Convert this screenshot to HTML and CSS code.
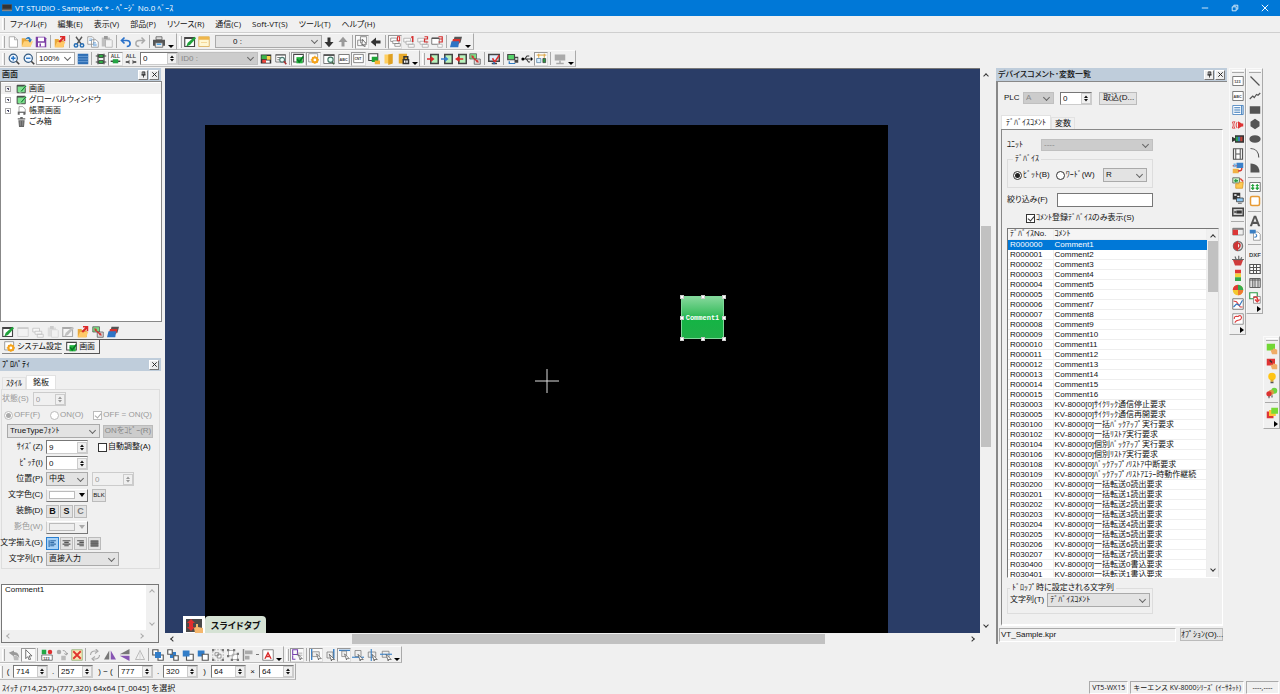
FILE: index.html
```html
<!DOCTYPE html>
<html lang="ja">
<head>
<meta charset="utf-8">
<title>VT STUDIO - Sample.vfx</title>
<link rel="stylesheet" href="styles.css">
</head>
<body>
<svg class="sprite" aria-hidden="true">
<symbol id="new" viewBox="0 0 16 16"><path d="M3 1h7l4 4v10H3z" fill="#fff" stroke="#999"/><path d="M10 1v4h4" fill="none" stroke="#999"/></symbol>
<symbol id="open" viewBox="0 0 16 16"><path d="M1 3h5l1 2h6v9H1z" fill="#e8a83a"/><path d="M4 7h12l-3 7H1z" fill="#ffd27a"/><path d="M6 4c3-4 7-3 7 1l2-1-3 5-3-4 2 1c0-3-3-3-5-1z" fill="#2878bd"/></symbol>
<symbol id="save" viewBox="0 0 16 16"><path d="M1 1h12l2 2v12H1z" fill="#7d3fa6"/><path d="M4 2h8v5H4zM4 9h9v5H4z" fill="#fff"/><path d="M6 10h2v4H6z" fill="#7d3fa6"/></symbol>
<symbol id="export" viewBox="0 0 16 16"><path d="M1 4h5l1 2h6v9H1z" fill="#e8a83a"/><path d="M4 8h11l-3 7H1z" fill="#ffc968"/><path d="M6 7l5-5H8V0h7v7h-2V4L8 9z" fill="#dc2a2a"/></symbol>
<symbol id="cut" viewBox="0 0 16 16"><path d="M4 1l7 10M12 1L5 11" stroke="#555" stroke-width="1.800"/><g fill="none" stroke="#286fb5" stroke-width="2"><circle cx="4" cy="12.500" r="2.300"/><circle cx="12" cy="12.500" r="2.300"/></g></symbol>
<symbol id="copy" viewBox="0 0 16 16"><path d="M1 1h6l2 2v8H1zM6 5h6l3 3v7H6z" fill="#fff" stroke="#8a8a8a"/><path d="M3 4h4M3 6h3M8 9h4M8 11h5M8 13h5" stroke="#5a9ad8"/></symbol>
<symbol id="paste" viewBox="0 0 16 16"><path d="M1 2h11v12H1z" fill="#c0c0c0"/><path d="M4 0h5v4H4z" fill="#999"/><path d="M6 5h8l1 1v9H6z" fill="#f4f4f4" stroke="#aaa"/></symbol>
<symbol id="undo" viewBox="0 0 16 16"><path d="M6 2L2 6l4 4M2 6h7c6 0 6 8 0 8" fill="none" stroke="#2a71c9" stroke-width="2.200"/></symbol>
<symbol id="redo" viewBox="0 0 16 16"><path d="M10 2l4 4-4 4M14 6H7c-6 0-6 8 0 8" fill="none" stroke="#aaa" stroke-width="2"/></symbol>
<symbol id="print" viewBox="0 0 16 16"><path d="M4 1h8v4H4z" fill="#ddd" stroke="#555"/><path d="M0 5h16v8H0z" fill="#555"/><path d="M3 9h10v6H3z" fill="#eee" stroke="#555"/><path d="M5 11h6" stroke="#55a8e8" stroke-width="2"/></symbol>
<symbol id="edit" viewBox="0 0 16 16"><path d="M1 2h13v12H1z" fill="#fff" stroke="#444" stroke-width="1.500"/><path d="M1 3h13" stroke="#444" stroke-width="2"/><path d="M3 14l2-5 9-8 2 2-8 9z" fill="#21a33b"/></symbol>
<symbol id="green" viewBox="0 0 16 16"><path d="M1 2h13v12H1z" fill="#7be38c" stroke="#444" stroke-width="1.500"/><path d="M1 3h13" stroke="#444" stroke-width="2"/><path d="M5 14l2-4 7-8 2 2-7 8z" fill="#179332" stroke="#e7ffe9" stroke-width=".7"/></symbol>
<symbol id="window" viewBox="0 0 16 16"><path d="M1 1h14v13H1z" fill="#fff7d3" stroke="#d8a84b"/><path d="M1 1h14v4H1z" fill="#efb64b"/><path d="M4 8h8v1H4z" fill="#f1cf88"/></symbol>
<symbol id="down" viewBox="0 0 16 16"><path d="M6 2h4v6h4l-6 7-6-7h4z" fill="#333"/></symbol>
<symbol id="up" viewBox="0 0 16 16"><path d="M6 14h4V8h4L8 1 2 8h4z" fill="#999"/></symbol>
<symbol id="left" viewBox="0 0 16 16"><path d="M14 6v4H8v4L1 8l7-6v4z" fill="#333"/></symbol>
<symbol id="pick" viewBox="0 0 16 16"><path d="M5 1h9v9H5zM1 6h8v8H1z" fill="none" stroke="#666"/><path d="M8 5l6 7-3 0 1 3-2 0-1-3-2 1z" fill="#fff" stroke="#444"/></symbol>
<symbol id="ov" viewBox="0 0 16 16"><path d="M1 3h9v5H1z" fill="#fff" stroke="#777"/><path d="M4 7h9v4H4zM7 11h8v4H7z" fill="#fff" stroke="#777"/></symbol>
<symbol id="ov0" viewBox="0 0 16 16"><use href="#ov"/><path d="M11 1h3v6h-3z" fill="#fff" stroke="#d53030" stroke-width="1.600"/></symbol>
<symbol id="ov1" viewBox="0 0 16 16"><use href="#ov" opacity=".6"/><path d="M11 2l2-1v7" fill="none" stroke="#d53030" stroke-width="2"/></symbol>
<symbol id="ov2" viewBox="0 0 16 16"><use href="#ov" opacity=".6"/><path d="M10 1h4v3h-4v4h5" fill="none" stroke="#d53030" stroke-width="1.600"/></symbol>
<symbol id="ov3" viewBox="0 0 16 16"><path d="M1 3h10v8H1z" fill="#fff" stroke="#555"/><path d="M1 3h10" stroke="#555" stroke-width="2"/><path d="M9 11h6v4H9z" fill="#fff" stroke="#aaa"/><path d="M10 1h5v7h-5M11 4h4" fill="none" stroke="#d53030" stroke-width="1.600"/></symbol>
<symbol id="layers" viewBox="0 0 16 16"><path d="M6 1h10l-2 8H4z" fill="#555"/><path d="M4 4h10l-2 7H2z" fill="#d9322e"/><path d="M2 7h10l-1 8H0z" fill="#2e74c5"/></symbol>
<symbol id="zin" viewBox="0 0 16 16"><circle cx="7" cy="7" r="5.500" fill="#eef6ff" stroke="#345a80" stroke-width="1.600"/><path d="M4 7h6M7 4v6" stroke="#2374c8" stroke-width="1.800"/><path d="M11 11l4 4" stroke="#444" stroke-width="2.200"/></symbol>
<symbol id="zout" viewBox="0 0 16 16"><circle cx="7" cy="7" r="5.500" fill="#eef6ff" stroke="#345a80" stroke-width="1.600"/><path d="M4 7h6" stroke="#2374c8" stroke-width="1.800"/><path d="M11 11l4 4" stroke="#444" stroke-width="2.200"/></symbol>
<symbol id="lines" viewBox="0 0 16 16"><path d="M1 1h14v14H1z" fill="#2f6fb5"/><path d="M1 4.500h14M1 8h14M1 11.500h14" stroke="#7ba9dc"/></symbol>
<symbol id="dev" viewBox="0 0 16 16"><path d="M1 4h14M1 12h14M4 1v14M12 1v14" stroke="#444" stroke-width="1.600"/><path d="M5 2h6v4H5zM5 10h6v4H5z" fill="#2fae45" stroke="#333"/></symbol>
<symbol id="all1" viewBox="0 0 16 16"><text x="1" y="7" class="g7">ALL</text><path d="M1 12h14" stroke="#333" stroke-width="2"/><path d="M4 9h8v6H4z" fill="#23a443"/></symbol>
<symbol id="all2" viewBox="0 0 16 16"><text x="1" y="7" class="g7">ALL</text><path d="M1 12h3M12 12h3" stroke="#333" stroke-width="2"/><path d="M6 9v6l-3-3zM10 9v6l3-3z" fill="#555"/></symbol>
<symbol id="img" viewBox="0 0 16 16"><path d="M1 2h14v12H1z" fill="#333"/><path d="M2 3h7v5H2z" fill="#39b54a"/><path d="M9 4h5v5H9z" fill="#ffd34d"/><path d="M3 9h5v4H3z" fill="#ee473d"/><path d="M8 10h5v3H8z" fill="#fff"/></symbol>
<symbol id="find" viewBox="0 0 16 16"><path d="M1 2h13v10H1z" fill="#fff" stroke="#555"/><path d="M1 3h13M3 6h4M3 9h3" stroke="#555"/><circle cx="9.500" cy="9" r="3.200" fill="#e9fff8" stroke="#4b7770" stroke-width="1.500"/><path d="M12 11l3 4" stroke="#a33" stroke-width="2"/></symbol>
<symbol id="check" viewBox="0 0 16 16"><path d="M1 2h14v11H1z" fill="#fff" stroke="#444" stroke-width="1.500"/><path d="M5 6h9v9H5z" fill="#25b540"/><path d="M6 9l3 4 6-8" fill="none" stroke="#087723" stroke-width="2.200"/></symbol>
<symbol id="gear" viewBox="0 0 16 16"><path d="M1 1h13v12H1z" fill="#fff" stroke="#777"/><circle cx="10" cy="10" r="3.500" fill="none" stroke="#f4a31c" stroke-width="3"/><path d="M10 4v12M4 10h12M6 6l8 8M14 6l-8 8" stroke="#f4a31c" stroke-width="1.600"/><circle cx="10" cy="10" r="2" fill="#fff"/></symbol>
<symbol id="mag" viewBox="0 0 16 16"><path d="M1 2h14v12H1z" fill="#fff" stroke="#555"/><path d="M1 3h14" stroke="#555" stroke-width="2"/><circle cx="10" cy="9" r="3.500" fill="#e0fff4" stroke="#476" stroke-width="1.500"/><path d="M12 12l3 3" stroke="#464" stroke-width="2"/></symbol>
<symbol id="abc" viewBox="0 0 16 16"><path d="M1 2h14v12H1z" fill="#fff" stroke="#555"/><text x="2" y="10" class="g6">ABC</text></symbol>
<symbol id="cnt" viewBox="0 0 16 16"><path d="M1 2h14v12H1z" fill="#fff" stroke="#555"/><text x="2" y="10" class="g6">CNT</text></symbol>
<symbol id="n123" viewBox="0 0 16 16"><path d="M1 2h14v12H1z" fill="#fff" stroke="#555"/><text x="3" y="10" class="g6">123</text></symbol>
<symbol id="lgreen" viewBox="0 0 16 16"><path d="M1 1h12v9H1z" fill="#fff" stroke="#444" stroke-width="1.500"/><path d="M5 5h8v7H5z" fill="#1da437"/><path d="M9 10h7v5H9z" fill="#f5b335"/></symbol>
<symbol id="door" viewBox="0 0 16 16"><path d="M2 2h10v12H2z" fill="#ffcf61"/><path d="M7 2l6-1v13l-6 2z" fill="#dfa022"/></symbol>
<symbol id="lock" viewBox="0 0 16 16"><path d="M1 1h11v13H1z" fill="#e7aa2d"/><path d="M6 8h9v7H6z" fill="#333"/><path d="M8 8V5h5v3" fill="none" stroke="#333" stroke-width="2"/><path d="M8 10h2v3H8zM11 10h2v3h-2z" fill="#fff"/></symbol>
<symbol id="inred" viewBox="0 0 16 16"><path d="M5 2h10v12H5z" fill="#b8f2bb" stroke="#444" stroke-width="2"/><path d="M0 7h5V4l5 4-5 4V9H0z" fill="#dc2727"/></symbol>
<symbol id="inblue" viewBox="0 0 16 16"><path d="M5 2h10v12H5z" fill="#b8f2bb" stroke="#444" stroke-width="2"/><path d="M0 7h5V4l5 4-5 4V9H0z" fill="#347fd0"/></symbol>
<symbol id="outred" viewBox="0 0 16 16"><path d="M5 2h10v12H5z" fill="#b8f2bb" stroke="#444" stroke-width="2"/><path d="M11 7H6V4L0 8l6 4V9h5z" fill="#dc2727"/></symbol>
<symbol id="swap" viewBox="0 0 16 16"><path d="M1 1h9v7H1z" fill="#7adf85" stroke="#555"/><path d="M7 8h8v7H7z" fill="#ddd" stroke="#555"/><path d="M4 5l7 6" stroke="#cf3434" stroke-width="1.800"/><path d="M3 3l4 1-3 3zM13 13l-4-1 3-3z" fill="#cf3434"/></symbol>
<symbol id="monitor" viewBox="0 0 16 16"><path d="M1 2h14v9H1z" fill="#dfeefb" stroke="#444" stroke-width="2"/><path d="M5 14h7" stroke="#444" stroke-width="2"/><path d="M6 7l3 5 6-9" fill="none" stroke="#dc3030" stroke-width="2"/><path d="M8 12v3" stroke="#2472c3" stroke-width="2"/></symbol>
<symbol id="pc" viewBox="0 0 16 16"><path d="M1 2h9v7H1z" fill="#56d36a" stroke="#444" stroke-width="1.500"/><path d="M10 5h5v8h-5z" fill="#444"/><path d="M11 7h3v2h-3z" fill="#fff"/><path d="M3 11v3h8" fill="none" stroke="#2f7ac2" stroke-width="1.600"/></symbol>
<symbol id="usb" viewBox="0 0 16 16"><path d="M2 8h12M5 8l3-4h3M7 8l3 4h2" fill="none" stroke="#333" stroke-width="1.400"/><circle cx="2.500" cy="8" r="2"/><path d="M13 5l3 3-3 3z"/></symbol>
<symbol id="net" viewBox="0 0 16 16"><path d="M1 3h14M4 1v6M12 1v6" stroke="#dca13a" stroke-width="1.400"/><path d="M1 8h6v6H1z" fill="#d8efff" stroke="#47749a"/><path d="M10 8h4v6h-4z" fill="#2b9a42" stroke="#333"/></symbol>
<symbol id="present" viewBox="0 0 16 16"><path d="M1 2h14v8H1z" fill="#aaa"/><path d="M8 10v4M3 14h10" stroke="#aaa" stroke-width="2"/></symbol>
<symbol id="frame" viewBox="0 0 16 16"><path d="M1 2h14v12H1z" fill="#f7f7f7" stroke="#999"/><path d="M1 3h14" stroke="#999" stroke-width="2"/></symbol>
<symbol id="report" viewBox="0 0 16 16"><path d="M4 1h6l4 4v8H4z" fill="#fff" stroke="#777"/><path d="M2 9h12v5H2z" fill="#666"/><path d="M5 11h6v4H5z" fill="#fff"/></symbol>
<symbol id="trash" viewBox="0 0 16 16"><path d="M3 5h10l-1 11H4zM2 2h12v2H2zM6 0h4v2H6z" fill="#666"/><path d="M6 6v8M10 6v8" stroke="#aaa"/></symbol>
<symbol id="cursor" viewBox="0 0 16 16"><path d="M4 1l9 9-4 0 2 5-2 1-2-5-3 3z" fill="#fff" stroke="#555" stroke-width="1.200"/></symbol>
<symbol id="hand" viewBox="0 0 16 16"><path d="M1 5l7-3v2c5 0 7 4 7 8-2-3-4-4-7-4v2z" fill="#999"/><path d="M7 9h4l3 2v4H8z" fill="#bbb"/></symbol>
<symbol id="num" viewBox="0 0 16 16"><path d="M1 1h6v6H1z" fill="#23a844"/><circle cx="12" cy="4" r="3" fill="#df3030"/><path d="M1 8h14v7H1z" fill="#fff" stroke="#555"/><text x="3" y="14" class="g6">123</text></symbol>
<symbol id="conv" viewBox="0 0 16 16"><circle cx="4" cy="4" r="3" fill="#aaa"/><path d="M9 2c4 0 5 3 5 5M11 6l3 2 2-3" fill="none" stroke="#888"/><path d="M7 9h6v6H7z" fill="#bbb"/></symbol>
<symbol id="delete" viewBox="0 0 16 16"><path d="M1 1h14v14H1z" fill="#fbe6b7" stroke="#87a96c"/><path d="M3 3l10 10M13 3L3 13" stroke="#df352e" stroke-width="2.400"/></symbol>
<symbol id="rotate" viewBox="0 0 16 16"><path d="M2 8c0-4 3-6 8-5M9 0l3 3-4 3M14 8c0 4-3 6-8 5M7 16l-3-3 4-3" fill="none" stroke="#aaa" stroke-width="1.500"/></symbol>
<symbol id="fliph" viewBox="0 0 16 16"><path d="M7 2v12H0z" fill="#777"/><path d="M9 2v12h7z" fill="#8755b3"/></symbol>
<symbol id="flipv" viewBox="0 0 16 16"><path d="M1 7L14 0v7z" fill="#777"/><path d="M1 9h13v7z" fill="#8755b3"/></symbol>
<symbol id="tri" viewBox="0 0 16 16"><path d="M8 2l6 12H2z" fill="none" stroke="#aaa"/><path d="M8 1v14" stroke="#ccc"/></symbol>
<symbol id="front" viewBox="0 0 16 16"><path d="M1 1h7v7H1zM8 8h7v7H8z" fill="#fff" stroke="#555" stroke-width="1.500"/><path d="M4 4h8v8H4z" fill="#327dc8"/></symbol>
<symbol id="back" viewBox="0 0 16 16"><path d="M4 4h8v8H4z" fill="#327dc8"/><path d="M1 1h6v6H1zM9 9h6v6H9z" fill="#fff" stroke="#555" stroke-width="1.500"/></symbol>
<symbol id="fwd" viewBox="0 0 16 16"><path d="M6 7h9v8H6z" fill="#fff" stroke="#555" stroke-width="1.500"/><path d="M1 2h9v8H1z" fill="#327dc8"/></symbol>
<symbol id="bwd" viewBox="0 0 16 16"><path d="M1 2h9v8H1z" fill="#327dc8"/><path d="M7 7h8v8H7z" fill="#fff" stroke="#555" stroke-width="1.500"/></symbol>
<symbol id="group" viewBox="0 0 16 16"><path d="M3 1h10M3 15h10M1 3v10M15 3v10" fill="none" stroke="#999" stroke-dasharray="2 2"/><path d="M4 5h5v4H4zM7 7h5v5H7z" fill="#fff" stroke="#777"/><path d="M0 0h3v3H0zM13 0h3v3h-3zM0 13h3v3H0zM13 13h3v3h-3z" fill="#777"/></symbol>
<symbol id="ungroup" viewBox="0 0 16 16"><path d="M2 2h7v7H2zM7 7h7v7H7z" fill="#fff" stroke="#999"/><path d="M0 0h3v3H0zM8 0h3v3H8zM0 8h3v3H0zM13 5h3v3h-3zM5 13h3v3H5zM13 13h3v3h-3z" fill="#777"/></symbol>
<symbol id="align" viewBox="0 0 16 16"><path d="M2 0v16" stroke="#888" stroke-width="2"/><path d="M4 2h10v5H4zM4 9h6v5H4z" fill="#aaa"/></symbol>
<symbol id="fonta" viewBox="0 0 16 16"><path d="M1 1h14v14H1z" fill="#fff" stroke="#666"/><path d="M3 13L8 3l5 10h-2L8 7l-3 6z" fill="#d82929"/><path d="M6 9h4v2H6z" fill="#d82929"/></symbol>
<symbol id="selg" viewBox="0 0 16 16"><path d="M1 1h7v7H1zM1 9v6h4" fill="none" stroke="#7944b0" stroke-width="1.600"/><path d="M7 6h8M7 9h8" stroke="#888"/><path d="M9 8l6 6h-3v2z" fill="#fff" stroke="#555"/></symbol>
<symbol id="snapl" viewBox="0 0 16 16"><path d="M1 0v16" stroke="#3c82c7" stroke-width="2"/><path d="M2 4h10v7H2z" fill="#eee" stroke="#777"/><path d="M8 7l7 7h-4v2z" fill="#fff" stroke="#555"/></symbol>
<symbol id="snapt" viewBox="0 0 16 16"><path d="M0 2h16" stroke="#3c82c7" stroke-width="2"/><path d="M4 3h7v8H4z" fill="#eee" stroke="#777"/><path d="M8 7l7 7h-4v2z" fill="#fff" stroke="#555"/></symbol>
<symbol id="snapm" viewBox="0 0 16 16"><path d="M3 3h9v8H3z" fill="#eee" stroke="#777"/><path d="M0 7h16" stroke="#3c82c7" stroke-width="1.500"/><path d="M8 7l7 7h-4v2z" fill="#fff" stroke="#555"/></symbol>
<symbol id="snapb" viewBox="0 0 16 16"><path d="M4 2h8v8H4z" fill="#eee" stroke="#777"/><path d="M0 11h16" stroke="#3c82c7" stroke-width="1.500"/><path d="M8 7l7 7h-4v2z" fill="#fff" stroke="#555"/></symbol>
<symbol id="snapr" viewBox="0 0 16 16"><path d="M13 0v13" stroke="#3c82c7" stroke-width="2"/><path d="M4 4h8v8H4z" fill="#eee" stroke="#777"/><path d="M7 7l7 7h-4v2z" fill="#fff" stroke="#555"/></symbol>
<symbol id="snapc" viewBox="0 0 16 16"><path d="M3 4h10v7H3z" fill="#eee" stroke="#777"/><path d="M7 0v16" stroke="#3c82c7" stroke-width="1.500"/><path d="M8 7l7 7h-4v2z" fill="#fff" stroke="#555"/></symbol>
<symbol id="list" viewBox="0 0 16 16"><path d="M1 2h14v12H1z" fill="#fff" stroke="#3576b8"/><path d="M3 5h8M3 8h8M3 11h8M13 2v12" stroke="#3576b8" stroke-width="1.500"/></symbol>
<symbol id="sound" viewBox="0 0 16 16"><path d="M8 3l5 3h2v4h-2l-5 3z" fill="#dd3434"/><path d="M7 4c-2 2-2 6 0 8M4 3c-2 3-2 7 0 10M2 3c-3 3-3 7 0 10" fill="none" stroke="#e24c4c" stroke-width="1.400"/></symbol>
<symbol id="video" viewBox="0 0 16 16"><path d="M4 3h12v10H4z" fill="#333"/><path d="M0 5l4 2v3l-4 2z" fill="#333"/><path d="M5 5h3v6H5z" fill="#2b9c50"/><path d="M8 5h3v6H8z" fill="#3979bf"/><path d="M11 5h3v6h-3z" fill="#bf4135"/></symbol>
<symbol id="film" viewBox="0 0 16 16"><path d="M2 1h12v14H2z" fill="#fff" stroke="#555" stroke-width="1.600"/><path d="M5 8h6M5 1v14M11 1v14" stroke="#555" stroke-width="1.400"/></symbol>
<symbol id="docs" viewBox="0 0 16 16"><path d="M6 1h9v7H6z" fill="#3a80c9"/><path d="M1 9h8v6H1z" fill="#f1b144"/><path d="M1 5h5M8 12c5 0 5-1 5-4" fill="none" stroke="#d43b32" stroke-width="2"/><path d="M2 2h3v5H2z" fill="#74b6e8"/></symbol>
<symbol id="folder" viewBox="0 0 16 16"><path d="M1 1h9v7H1z" fill="#c7f0c7" stroke="#555"/><path d="M3 5h5M5 3v4" stroke="#2a9c43" stroke-width="2"/><path d="M5 9h4l1-2h5l-1 8H5z" fill="#ffc950" stroke="#d59622"/><path d="M11 2l4 4" stroke="#de4436" stroke-width="2"/></symbol>
<symbol id="remote" viewBox="0 0 16 16"><path d="M1 1h10v9H1z" fill="#333"/><path d="M3 3h3v2H3zM7 5h3v2H7z" fill="#fff"/><path d="M6 8h9v5H6z" fill="#8ec7f2" stroke="#333"/><path d="M8 15h5" stroke="#333"/></symbol>
<symbol id="term" viewBox="0 0 16 16"><path d="M1 3h14v10H1z" fill="#ccc" stroke="#444" stroke-width="2"/><path d="M6 6h7v4H6z" fill="#333"/><path d="M3 8h3" stroke="#333" stroke-width="2"/></symbol>
<symbol id="alarm" viewBox="0 0 16 16"><path d="M1 3h14v9H1z" fill="#eee" stroke="#777"/><path d="M1 3h14v2H1z" fill="#777"/><path d="M1 5h7v7H1z" fill="#dc3636"/></symbol>
<symbol id="recipe" viewBox="0 0 16 16"><circle cx="8" cy="8" r="6" fill="#eee" stroke="#777" stroke-width="2"/><path d="M8 1v14L2 11V5z" fill="#ce3434"/><path d="M7 4c5 0 5 6 0 8" fill="none" stroke="#ce3434" stroke-width="2"/></symbol>
<symbol id="basket" viewBox="0 0 16 16"><path d="M1 6h14l-3 8H4z" fill="#cf3c3c"/><path d="M4 2l2 5M9 1v6M13 3l-2 4M0 6h16" stroke="#666" stroke-width="1.500"/></symbol>
<symbol id="bars" viewBox="0 0 16 16"><path d="M4 1h8v5H4z" fill="#df3535"/><path d="M4 6h8v5H4z" fill="#f4d33b"/><path d="M4 11h8v5H4z" fill="#34a84b"/></symbol>
<symbol id="pie" viewBox="0 0 16 16"><circle cx="8" cy="8" r="7" fill="#f4c82f"/><path d="M8 8V1a7 7 0 0 1 7 7z" fill="#35ab4d"/><path d="M8 8H1a7 7 0 0 1 7-7z" fill="#dd3939"/><path d="M8 8h7a7 7 0 0 1-7 7z" fill="#ef7930"/></symbol>
<symbol id="trend" viewBox="0 0 16 16"><path d="M1 1h14v14H1z" fill="#fff" stroke="#555"/><path d="M2 4l4 1 5 7 3 0" fill="none" stroke="#db3e3e" stroke-width="1.500"/><path d="M2 12l4-4 4 2 4-7" fill="none" stroke="#3476bd" stroke-width="1.500"/></symbol>
<symbol id="trend2" viewBox="0 0 16 16"><path d="M1 1h14v14H1z" fill="#fff" stroke="#777"/><path d="M3 8c0-6 4-2 6-4s5 1 3 4-7 0-8 5" fill="none" stroke="#db3e3e" stroke-width="1.500"/></symbol>
<symbol id="line" viewBox="0 0 16 16"><path d="M2 2l12 12" stroke="#555" stroke-width="1.600"/></symbol>
<symbol id="poly" viewBox="0 0 16 16"><path d="M1 12l4-4 2 2 3-4 2 1 3-3" fill="none" stroke="#555" stroke-width="1.600"/></symbol>
<symbol id="rect" viewBox="0 0 16 16"><path d="M1 3h14v10H1z" fill="#555"/></symbol>
<symbol id="hex" viewBox="0 0 16 16"><path d="M8 1l6 4v6l-6 4-6-4V5z" fill="#555"/></symbol>
<symbol id="ell" viewBox="0 0 16 16"><ellipse cx="8" cy="8" rx="7.500" ry="5" fill="#555"/></symbol>
<symbol id="arc" viewBox="0 0 16 16"><path d="M2 2c7 0 11 5 11 12" fill="none" stroke="#555" stroke-width="1.500"/></symbol>
<symbol id="sector" viewBox="0 0 16 16"><path d="M2 2c8 0 12 5 12 12H2z" fill="#555"/></symbol>
<symbol id="scale" viewBox="0 0 16 16"><path d="M1 2h14v12H1z" fill="#fff" stroke="#555"/><path d="M5 4v8M11 4v8M3 9l2 2 2-2M9 9l2 2 2-2M3 6h4M9 6h4" fill="none" stroke="#23a33d" stroke-width="1.600"/></symbol>
<symbol id="round" viewBox="0 0 16 16"><rect x="2" y="2" width="12" height="12" rx="2" fill="#fff" stroke="#e79a35" stroke-width="2"/></symbol>
<symbol id="bigA" viewBox="0 0 16 16"><path d="M1 15L6.500 1h3L15 15h-3l-1-3H5l-1 3zM6 9h4L8 4z" fill="#555" fill-rule="evenodd"/></symbol>
<symbol id="page" viewBox="0 0 16 16"><path d="M6 4h6l3 3v8H6z" fill="#fff" stroke="#888"/><path d="M1 1h8v5H1z" fill="#3b7fc3"/><path d="M7 11c4 0 4-3 2-4" fill="none" stroke="#3b7fc3" stroke-width="1.500"/></symbol>
<symbol id="dxf" viewBox="0 0 16 16"><text x="0" y="11" class="g8">DXF</text></symbol>
<symbol id="grid" viewBox="0 0 16 16"><path d="M1 2h14v12H1zM1 6h14M1 10h14M6 2v12M10 2v12" fill="#fff" stroke="#555" stroke-width="1.400"/></symbol>
<symbol id="table" viewBox="0 0 16 16"><path d="M1 2h14v12H1zM1 4h14M5 2v12M8 2v12M12 2v12" fill="#ddd" stroke="#555" stroke-width="1.200"/></symbol>
<symbol id="parts" viewBox="0 0 16 16"><path d="M1 1h10v8H1z" fill="#fff" stroke="#2b9b45" stroke-width="1.500"/><path d="M6 6h9v9H6z" fill="#fff" stroke="#777"/><path d="M6 8c4-3 6 0 5 3M8 10l3 3 3-3" fill="none" stroke="#dd3a3a" stroke-width="2"/></symbol>
<symbol id="gh" viewBox="0 0 16 16"><path d="M1 1h11v9H1z" fill="#72d735"/><path d="M6 9h3l1-2 5 2v6H8z" fill="#efac67"/></symbol>
<symbol id="rh" viewBox="0 0 16 16"><path d="M1 1h11v9H1z" fill="#df3434"/><path d="M5 3l3 3" stroke="#333" stroke-width="2"/><path d="M6 9h3l1-2 5 2v6H8z" fill="#efac67"/></symbol>
<symbol id="bulb" viewBox="0 0 16 16"><circle cx="8" cy="6" r="5" fill="#ffc414"/><path d="M6 10h4v3H6z" fill="#e0ae28"/><path d="M6 14h4" stroke="#555" stroke-width="2"/></symbol>
<symbol id="balls" viewBox="0 0 16 16"><circle cx="11" cy="5" r="4" fill="#6cd33f"/><circle cx="7" cy="7" r="3.500" fill="#d89842"/><circle cx="4" cy="9" r="3.500" fill="#dd3232"/><path d="M4 12v3M8 11v3" stroke="#555" stroke-width="1.500"/></symbol>
<symbol id="blocks" viewBox="0 0 16 16"><path d="M1 6h9v9H1z" fill="#df3636"/><path d="M4 4h9v8H4z" fill="#ffc637"/><path d="M7 1h9v8H7z" fill="#78da37"/></symbol>
<symbol id="pin" viewBox="0 0 16 16"><path d="M5 2h6v7H5zM3 9h10M8 9v6M9 2v7" fill="none" stroke="#222" stroke-width="1.800"/></symbol>
<symbol id="x" viewBox="0 0 16 16"><path d="M3 3l10 10M13 3L3 13" stroke="#222" stroke-width="2.200"/></symbol>
<symbol id="ud" viewBox="0 0 8 12"><path d="M0 5l4-5 4 5zM0 7l4 5 4-5z" fill="currentColor"/></symbol>
<symbol id="tl" viewBox="0 0 16 16"><path d="M2 2v12" stroke="#336da8" stroke-width="2"/><path d="M4 3h10M4 6h7M4 9h10M4 12h7" stroke="#336da8" stroke-width="2"/></symbol>
<symbol id="tc" viewBox="0 0 16 16"><path d="M1 3h14M4 6h8M1 9h14M4 12h8" stroke="#555" stroke-width="2"/></symbol>
<symbol id="tr" viewBox="0 0 16 16"><path d="M2 3h12M6 6h8M2 9h12M6 12h8" stroke="#555" stroke-width="2"/></symbol>
<symbol id="tj" viewBox="0 0 16 16"><path d="M1 2h14v12H1z" fill="#777"/><path d="M1 5h14M1 8h14M1 11h14" stroke="#555"/></symbol>
</svg>

<header class="titlebar">
  <svg class="logo" viewBox="0 0 16 12" aria-hidden="true"><path d="M0 0h16v11H0z" fill="#555"/><path d="M1 1h14v6H1z" fill="#333"/><path d="M0 9h16v2H0z" fill="#888"/></svg>
  <h1>VT STUDIO - Sample.vfx * - ﾍﾟｰｼﾞ No.0 ﾍﾞｰｽ</h1>
  <div class="winbtns">
    <button aria-label="最小化"><svg viewBox="0 0 10 10"><path d="M1 5h8" stroke="#fff"/></svg></button>
    <button aria-label="元に戻す"><svg viewBox="0 0 10 10"><path d="M1.500 3.500h5v5h-5zM3.500 3V1.500h5v5H7" fill="none" stroke="#fff"/></svg></button>
    <button aria-label="閉じる"><svg viewBox="0 0 10 10"><path d="M1 1l8 8M9 1L1 9" stroke="#fff" stroke-width="1.200"/></svg></button>
  </div>
</header>
<nav class="menubar"><i class="grip"></i><button>ファイル(F)</button><button>編集(E)</button><button>表示(V)</button><button>部品(P)</button><button>リソース(R)</button><button>通信(C)</button><button>Soft-VT(S)</button><button>ツール(T)</button><button>ヘルプ(H)</button></nav>

<div class="toolrow row-a">
  <div class="tools"><i class="grip"></i><button aria-label="新規"><svg><use href="#new"/></svg></button><button aria-label="開く"><svg><use href="#open"/></svg></button><button aria-label="保存"><svg><use href="#save"/></svg></button><i class="sep"></i><button aria-label="書き出し"><svg><use href="#export"/></svg></button><i class="sep"></i><button aria-label="切り取り"><svg><use href="#cut"/></svg></button><button aria-label="コピー"><svg><use href="#copy"/></svg></button><button aria-label="貼り付け"><svg><use href="#paste"/></svg></button><i class="sep"></i><button aria-label="元に戻す"><svg><use href="#undo"/></svg></button><button aria-label="やり直し"><svg><use href="#redo"/></svg></button><i class="sep"></i><button aria-label="印刷"><svg><use href="#print"/></svg></button><i class="more"></i></div>
  <div class="tools"><i class="grip"></i><button aria-label="画面編集"><svg><use href="#edit"/></svg></button><button aria-label="ウィンドウ"><svg><use href="#window"/></svg></button><span class="combo page-combo"><select aria-label="ページ"><option>0 :</option></select></span><button aria-label="次"><svg><use href="#down"/></svg></button><button aria-label="前"><svg><use href="#up"/></svg></button><i class="sep"></i><button class="on" aria-label="選択"><svg><use href="#pick"/></svg></button><button aria-label="戻る"><svg><use href="#left"/></svg></button><i class="sep"></i><button class="on" aria-label="重ね0"><svg><use href="#ov0"/></svg></button><button aria-label="重ね1"><svg><use href="#ov1"/></svg></button><button aria-label="重ね2"><svg><use href="#ov2"/></svg></button><button aria-label="重ね3"><svg><use href="#ov3"/></svg></button><i class="sep"></i><button aria-label="レイヤー"><svg><use href="#layers"/></svg></button><i class="more"></i></div>
</div>
<div class="toolrow row-b">
  <div class="tools"><i class="grip"></i><button aria-label="拡大"><svg><use href="#zin"/></svg></button><button aria-label="縮小"><svg><use href="#zout"/></svg></button><span class="combo zoom-combo"><select aria-label="倍率"><option>100%</option></select></span><button aria-label="グリッド"><svg><use href="#lines"/></svg></button><i class="sep"></i><button aria-label="デバイス"><svg><use href="#dev"/></svg></button><button class="on" aria-label="全ON"><svg><use href="#all1"/></svg></button><button aria-label="全OFF"><svg><use href="#all2"/></svg></button><span class="spin id-spin"><input aria-label="状態番号" value="0"><svg><use href="#ud"/></svg></span><span class="combo id-combo"><select aria-label="ID" disabled><option>ID0 :</option></select></span><button aria-label="画像"><svg><use href="#img"/></svg></button><button aria-label="検索"><svg><use href="#find"/></svg></button><i class="sep"></i><button class="on" aria-label="画面"><svg><use href="#check"/></svg></button><button class="on" aria-label="設定"><svg><use href="#gear"/></svg></button><button aria-label="プレビュー"><svg><use href="#mag"/></svg></button><button aria-label="文字"><svg><use href="#abc"/></svg></button><button class="on" aria-label="カウンタ"><svg><use href="#cnt"/></svg></button><button aria-label="部品"><svg><use href="#lgreen"/></svg></button><button aria-label="ライブラリ"><svg><use href="#door"/></svg></button><button aria-label="ロック"><svg><use href="#lock"/></svg></button><i class="more"></i></div>
  <div class="tools"><i class="grip"></i><button aria-label="転送"><svg><use href="#inred"/></svg></button><button aria-label="差分転送"><svg><use href="#inblue"/></svg></button><button aria-label="読出し"><svg><use href="#outred"/></svg></button><button aria-label="照合"><svg><use href="#swap"/></svg></button><i class="sep"></i><button aria-label="モニタ"><svg><use href="#monitor"/></svg></button><i class="sep"></i><button aria-label="PC接続"><svg><use href="#pc"/></svg></button><button aria-label="USB"><svg><use href="#usb"/></svg></button><button class="on" aria-label="ネットワーク"><svg><use href="#net"/></svg></button><i class="sep"></i><button aria-label="シミュレータ"><svg><use href="#present"/></svg></button><i class="more"></i></div>
</div>

<main class="main">
  <aside class="left">
    <div class="panel-head"><h2>画面</h2><button aria-label="固定"><svg><use href="#pin"/></svg></button><button aria-label="閉じる"><svg><use href="#x"/></svg></button></div>
    <ul class="tree">
      <li class="sel"><b class="plus"></b><svg><use href="#green"/></svg>画面</li>
      <li><b class="plus"></b><svg><use href="#green"/></svg>グローバルウィンドウ</li>
      <li><b class="plus"></b><svg><use href="#report"/></svg>帳票画面</li>
      <li><b class="noplus"></b><svg><use href="#trash"/></svg>ごみ箱</li>
    </ul>
    <div class="tree-tools"><button aria-label="編集"><svg><use href="#edit"/></svg></button><button aria-label="新規" disabled><svg><use href="#frame"/></svg></button><button aria-label="コピー" disabled><svg><use href="#ov"/></svg></button><button aria-label="貼り付け" disabled><svg><use href="#paste"/></svg></button><button aria-label="削除" disabled><svg><use href="#edit"/></svg></button><button aria-label="書き出し"><svg><use href="#export"/></svg></button><button aria-label="置換"><svg><use href="#swap"/></svg></button><button aria-label="レイヤー"><svg><use href="#layers"/></svg></button></div>
    <div class="dock-tabs"><button><svg><use href="#gear"/></svg>システム設定</button><button class="active"><svg><use href="#check"/></svg>画面</button></div>
    <div class="panel-head prop-head"><h2>ﾌﾟﾛﾊﾟﾃｨ</h2><button aria-label="閉じる"><svg><use href="#x"/></svg></button></div>
    <div class="tabs"><button>ｽﾀｲﾙ</button><button class="active">銘板</button></div>
    <form class="props">
      <div class="prow dis"><label for="st">状態(S)</label><span class="spin w33"><input id="st" value="0" disabled><svg><use href="#ud"/></svg></span></div>
      <div class="prow spread dis"><label><input type="radio" name="s" checked disabled>OFF(F)</label><label><input type="radio" name="s" disabled>ON(O)</label><label><input type="checkbox" checked disabled>OFF = ON(Q)</label></div>
      <div class="prow pad"><span class="combo w92"><select aria-label="フォント"><option>TrueTypeﾌｫﾝﾄ</option></select></span><button type="button" class="btn grow" disabled>ONをｺﾋﾟｰ(R)</button></div>
      <div class="prow"><label class="lab" for="sz">ｻｲｽﾞ(Z)</label><span class="spin w42"><input id="sz" value="9"><svg><use href="#ud"/></svg></span><label class="auto"><input type="checkbox">自動調整(A)</label></div>
      <div class="prow"><label class="lab" for="pt">ﾋﾟｯﾁ(I)</label><span class="spin w42"><input id="pt" value="0"><svg><use href="#ud"/></svg></span></div>
      <div class="prow"><label class="lab" for="po">位置(P)</label><span class="combo w42"><select id="po"><option>中央</option></select></span><span class="spin w42 dis"><input aria-label="位置量" value="0" disabled><svg><use href="#ud"/></svg></span></div>
      <div class="prow"><label class="lab" for="co">文字色(C)</label><button type="button" id="co" class="color"><i></i></button><button type="button" class="btn sq blk">BLK</button></div>
      <div class="prow tight"><span class="lab">装飾(D)</span><button type="button" class="btn sq deco">B</button><button type="button" class="btn sq deco">S</button><button type="button" class="btn sq deco out">C</button></div>
      <div class="prow dis"><label class="lab" for="sh">影色(W)</label><button type="button" id="sh" class="color" disabled><i></i></button></div>
      <div class="prow tight"><span class="lab">文字揃え(G)</span><button type="button" class="btn sq act" aria-label="左"><svg><use href="#tl"/></svg></button><button type="button" class="btn sq" aria-label="中央"><svg><use href="#tc"/></svg></button><button type="button" class="btn sq" aria-label="右"><svg><use href="#tr"/></svg></button><button type="button" class="btn sq" aria-label="均等"><svg><use href="#tj"/></svg></button></div>
      <div class="prow"><label class="lab" for="mj">文字列(T)</label><span class="combo w72"><select id="mj"><option>直接入力</option></select></span></div>
    </form>
    <div class="memo"><textarea aria-label="文字列">Comment1</textarea><i class="ch u"></i><i class="ch d"></i><i class="ch l"></i><i class="ch r"></i></div>
  </aside>

  <section class="work">
    <div class="view">
      <div class="stage">
        <svg class="cross" viewBox="0 0 24 24"><path d="M12 0v24M0 12h24" stroke="#ddd"/></svg>
        <div class="switch">Comment1<i></i><i></i><i></i><i></i><i></i><i></i><i></i><i></i></div>
      </div>
      <div class="slide"><svg viewBox="0 0 22 17"><path d="M0 0h22v17H0z" fill="#fff"/><path d="M3 3h16v13H3z" fill="#4a4a4a"/><path d="M8 3l4 4h-2v4h2l-4 4-4-4h2V7H4z" fill="#e02d2d"/><path d="M11 12l2-1V8h2v3l5 1v5h-8z" fill="#f5b76d"/></svg><button>スライドタブ</button></div>
    </div>
    <div class="vscroll"><i class="ch u"></i><b></b><i class="ch d"></i></div>
    <div class="hscroll"><i class="ch l"></i><b></b><i class="ch r"></i></div>
  </section>

  <aside class="right">
    <div class="panel-head"><h2>デバイスコメント･変数一覧</h2><button aria-label="固定"><svg><use href="#pin"/></svg></button><button aria-label="閉じる"><svg><use href="#x"/></svg></button></div>
    <div class="rbody">
      <div class="plc"><label for="plc">PLC</label><span class="combo w30"><select id="plc" disabled><option>A</option></select></span><span class="spin w32"><input aria-label="局番" value="0"><svg><use href="#ud"/></svg></span><button class="btn take">取込(D...</button></div>
      <div class="tabs"><button class="active">ﾃﾞﾊﾞｲｽｺﾒﾝﾄ</button><button>変数</button></div>
      <div class="sheet">
        <div class="form">
          <div class="frow"><label for="un">ﾕﾆｯﾄ</label><span class="combo"><select id="un" disabled><option>----</option></select></span></div>
          <fieldset class="device"><legend>ﾃﾞﾊﾞｲｽ</legend><label><input type="radio" name="d" checked>ﾋﾞｯﾄ(B)</label><label><input type="radio" name="d">ﾜｰﾄﾞ(W)</label><span class="combo w44"><select aria-label="種別"><option>R</option></select></span></fieldset>
          <div class="frow filter"><label for="fi">絞り込み(F)</label><input id="fi" type="text"></div>
          <label class="only"><input type="checkbox" checked>ｺﾒﾝﾄ登録ﾃﾞﾊﾞｲｽのみ表示(S)</label>
        </div>
        <div class="listbox">
          <div class="rows"><table>
            <thead><tr><th>ﾃﾞﾊﾞｲｽNo.</th><th>ｺﾒﾝﾄ</th></tr></thead>
            <tbody>
            <tr class="sel"><td>R000000</td><td>Comment1</td></tr>
            <tr><td>R000001</td><td>Comment2</td></tr>
            <tr><td>R000002</td><td>Comment3</td></tr>
            <tr><td>R000003</td><td>Comment4</td></tr>
            <tr><td>R000004</td><td>Comment5</td></tr>
            <tr><td>R000005</td><td>Comment6</td></tr>
            <tr><td>R000006</td><td>Comment7</td></tr>
            <tr><td>R000007</td><td>Comment8</td></tr>
            <tr><td>R000008</td><td>Comment9</td></tr>
            <tr><td>R000009</td><td>Comment10</td></tr>
            <tr><td>R000010</td><td>Comment11</td></tr>
            <tr><td>R000011</td><td>Comment12</td></tr>
            <tr><td>R000012</td><td>Comment13</td></tr>
            <tr><td>R000013</td><td>Comment14</td></tr>
            <tr><td>R000014</td><td>Comment15</td></tr>
            <tr><td>R000015</td><td>Comment16</td></tr>
            <tr><td>R030003</td><td>KV-8000[0]ｻｲｸﾘｯｸ通信停止要求</td></tr>
            <tr><td>R030005</td><td>KV-8000[0]ｻｲｸﾘｯｸ通信再開要求</td></tr>
            <tr><td>R030100</td><td>KV-8000[0]一括ﾊﾞｯｸｱｯﾌﾟ実行要求</td></tr>
            <tr><td>R030102</td><td>KV-8000[0]一括ﾘｽﾄｱ実行要求</td></tr>
            <tr><td>R030104</td><td>KV-8000[0]個別ﾊﾞｯｸｱｯﾌﾟ実行要求</td></tr>
            <tr><td>R030106</td><td>KV-8000[0]個別ﾘｽﾄｱ実行要求</td></tr>
            <tr><td>R030108</td><td>KV-8000[0]ﾊﾞｯｸｱｯﾌﾟ/ﾘｽﾄｱ中断要求</td></tr>
            <tr><td>R030109</td><td>KV-8000[0]ﾊﾞｯｸｱｯﾌﾟ/ﾘｽﾄｱｴﾗｰ時動作継続</td></tr>
            <tr><td>R030200</td><td>KV-8000[0]一括転送0読出要求</td></tr>
            <tr><td>R030201</td><td>KV-8000[0]一括転送1読出要求</td></tr>
            <tr><td>R030202</td><td>KV-8000[0]一括転送2読出要求</td></tr>
            <tr><td>R030203</td><td>KV-8000[0]一括転送3読出要求</td></tr>
            <tr><td>R030204</td><td>KV-8000[0]一括転送4読出要求</td></tr>
            <tr><td>R030205</td><td>KV-8000[0]一括転送5読出要求</td></tr>
            <tr><td>R030206</td><td>KV-8000[0]一括転送6読出要求</td></tr>
            <tr><td>R030207</td><td>KV-8000[0]一括転送7読出要求</td></tr>
            <tr><td>R030400</td><td>KV-8000[0]一括転送0書込要求</td></tr>
            <tr><td>R030401</td><td>KV-8000[0]一括転送1書込要求</td></tr>
            </tbody>
          </table></div>
          <div class="vscroll list-scroll"><i class="ch u"></i><b></b><i class="ch d"></i></div>
        </div>
        <fieldset class="drop"><legend>ﾄﾞﾛｯﾌﾟ時に設定される文字列</legend><label for="dr">文字列(T)</label><span class="combo w102"><select id="dr"><option>ﾃﾞﾊﾞｲｽｺﾒﾝﾄ</option></select></span></fieldset>
      </div>
      <div class="rfoot"><span>VT_Sample.kpr</span><button class="btn">ｵﾌﾟｼｮﾝ(O)...</button></div>
    </div>
  </aside>

  <div class="vtools tall"><i class="hgrip"></i><button aria-label="数値"><svg><use href="#n123"/></svg></button><button aria-label="文字"><svg><use href="#abc"/></svg></button><button aria-label="一覧"><svg><use href="#list"/></svg></button><button aria-label="音声"><svg><use href="#sound"/></svg></button><button aria-label="ビデオ"><svg><use href="#video"/></svg></button><button aria-label="動画"><svg><use href="#film"/></svg></button><button aria-label="文書"><svg><use href="#docs"/></svg></button><button aria-label="フォルダ"><svg><use href="#folder"/></svg></button><button aria-label="リモート"><svg><use href="#remote"/></svg></button><button aria-label="端末"><svg><use href="#term"/></svg></button><i class="hsep"></i><button aria-label="アラーム"><svg><use href="#alarm"/></svg></button><button aria-label="レシピ"><svg><use href="#recipe"/></svg></button><button aria-label="収集"><svg><use href="#basket"/></svg></button><button aria-label="棒グラフ"><svg><use href="#bars"/></svg></button><button aria-label="円グラフ"><svg><use href="#pie"/></svg></button><button aria-label="トレンド"><svg><use href="#trend"/></svg></button><button aria-label="XYグラフ"><svg><use href="#trend2"/></svg></button><i class="vmore"></i></div>
  <div class="vtools mid"><i class="hgrip"></i><button aria-label="直線"><svg><use href="#line"/></svg></button><button aria-label="折れ線"><svg><use href="#poly"/></svg></button><button aria-label="四角"><svg><use href="#rect"/></svg></button><button aria-label="多角形"><svg><use href="#hex"/></svg></button><button aria-label="楕円"><svg><use href="#ell"/></svg></button><button aria-label="円弧"><svg><use href="#arc"/></svg></button><button aria-label="扇形"><svg><use href="#sector"/></svg></button><i class="hsep"></i><button aria-label="目盛"><svg><use href="#scale"/></svg></button><button aria-label="枠"><svg><use href="#round"/></svg></button><i class="hsep"></i><button aria-label="テキスト"><svg><use href="#bigA"/></svg></button><button aria-label="ページ"><svg><use href="#page"/></svg></button><i class="hsep"></i><button aria-label="DXF"><svg><use href="#dxf"/></svg></button><button aria-label="格子"><svg><use href="#grid"/></svg></button><button aria-label="表"><svg><use href="#table"/></svg></button><button aria-label="部品"><svg><use href="#parts"/></svg></button><i class="vmore"></i></div>
  <div class="vtools short"><i class="hgrip"></i><button aria-label="スイッチ"><svg><use href="#gh"/></svg></button><button aria-label="切替"><svg><use href="#rh"/></svg></button><button aria-label="ランプ"><svg><use href="#bulb"/></svg></button><button aria-label="多段ランプ"><svg><use href="#balls"/></svg></button><i class="hsep"></i><button aria-label="部品"><svg><use href="#blocks"/></svg></button><i class="vmore"></i></div>
</main>

<div class="toolrow row-c">
  <div class="tools"><i class="grip"></i><button aria-label="手"><svg><use href="#hand"/></svg></button><button class="on" aria-label="選択"><svg><use href="#cursor"/></svg></button><i class="sep"></i><button aria-label="番号"><svg><use href="#num"/></svg></button><button aria-label="変換"><svg><use href="#conv"/></svg></button><button aria-label="削除"><svg><use href="#delete"/></svg></button><i class="sep"></i><button aria-label="回転"><svg><use href="#rotate"/></svg></button><button aria-label="左右反転"><svg><use href="#fliph"/></svg></button><button aria-label="上下反転"><svg><use href="#flipv"/></svg></button><button aria-label="変形"><svg><use href="#tri"/></svg></button><i class="sep"></i><button aria-label="最前面"><svg><use href="#front"/></svg></button><button aria-label="最背面"><svg><use href="#back"/></svg></button><button aria-label="前面"><svg><use href="#fwd"/></svg></button><button aria-label="背面"><svg><use href="#bwd"/></svg></button><button aria-label="グループ"><svg><use href="#group"/></svg></button><button aria-label="解除"><svg><use href="#ungroup"/></svg></button><button aria-label="整列"><svg><use href="#align"/></svg></button><i class="dash"></i><button aria-label="文字"><svg><use href="#fonta"/></svg></button><i class="more"></i></div>
  <div class="tools"><i class="grip"></i><button class="on" aria-label="部品選択"><svg><use href="#selg"/></svg></button><i class="sep"></i><button class="on" aria-label="左端"><svg><use href="#snapl"/></svg></button><button aria-label="右端"><svg><use href="#snapr"/></svg></button><button class="on" aria-label="上端"><svg><use href="#snapt"/></svg></button><button aria-label="下端"><svg><use href="#snapb"/></svg></button><button aria-label="中央"><svg><use href="#snapc"/></svg></button><button aria-label="中段"><svg><use href="#snapm"/></svg></button><i class="more"></i></div>
</div>
<div class="toolrow coords">
  <div class="tools"><i class="grip"></i><span class="p">(</span><span class="spin"><input aria-label="左" value="714"><svg><use href="#ud"/></svg></span><span class="p">.</span><span class="spin"><input aria-label="上" value="257"><svg><use href="#ud"/></svg></span><span class="p wide">) − (</span><span class="spin"><input aria-label="右" value="777"><svg><use href="#ud"/></svg></span><span class="p">.</span><span class="spin"><input aria-label="下" value="320"><svg><use href="#ud"/></svg></span><span class="p mid">)</span><span class="spin"><input aria-label="幅" value="64"><svg><use href="#ud"/></svg></span><span class="p mid">×</span><span class="spin"><input aria-label="高さ" value="64"><svg><use href="#ud"/></svg></span></div>
</div>
<footer class="status"><span class="msg">ｽｲｯﾁ (714,257)-(777,320) 64x64 [T_0045] を選択</span><span>VT5-WX15</span><span>キーエンス KV-8000ｼﾘｰｽﾞ (ｲｰｻﾈｯﾄ)</span><span class="pos">----,----</span></footer>
</body>
</html>
```
FILE: styles.css
```css
* { box-sizing: border-box; }
body {
  margin: 0; height: 100vh; display: flex; flex-direction: column; overflow: hidden;
  background: #f0f0f0; color: #111;
  font: 8px/10px "Liberation Sans", "Noto Sans CJK JP", sans-serif;
  font-feature-settings: "palt";
}
button, input, select, textarea { font: inherit; font-feature-settings: inherit; color: inherit; margin: 0; padding: 0; border: 0; border-radius: 0; background: none; }
h1, h2, ul { margin: 0; padding: 0; font: inherit; }
i { font-style: normal; }
.sprite { display: none; }
.g6, .g7, .g8 { font-family: "Liberation Sans", sans-serif; font-weight: bold; fill: #444; }
.g6 { font-size: 5px; }
.g7 { font-size: 7px; }
.g8 { font-size: 8px; }

.titlebar { height: 16px; flex: none; display: flex; align-items: center; gap: 3px; padding-left: 2px; background: #0078d7; color: #fff; font-family: "Open Sans", "Noto Sans CJK JP", sans-serif; }
.logo { width: 10px; height: 8px; }
.winbtns { margin-left: auto; display: flex; }
.winbtns button { width: 30px; height: 14px; display: grid; place-items: center; }
.winbtns svg { width: 8px; height: 8px; }
.menubar { height: 17px; flex: none; display: flex; align-items: center; gap: 11px; border-bottom: 1px solid #cfcfcf; font-family: "Open Sans", "Noto Sans CJK JP", sans-serif; }
.menubar .grip { margin-right: -6px; }
.menubar button { white-space: nowrap; }

.toolrow { display: flex; height: 17px; flex: none; }
.tools { display: flex; align-items: center; border: 1px solid; border-color: #fafafa #aaa #bbb #fafafa; border-left: 0; padding-right: 1px; }
.grip { width: 3px; height: 12px; margin: 0 1px 0 2px; border-left: 1px solid #fff; border-right: 1px solid #aaa; flex: none; }
.sep { width: 1px; height: 13px; margin: 0 2px; background: #aaa; flex: none; }
.tools button { width: 14px; height: 14px; display: grid; place-items: center; flex: none; }
.tools button svg { width: 12px; height: 12px; }
.tools .on { background: #fafafa; border: 1px solid; border-color: #999 #ddd #ddd #999; }
.tools .on svg { width: 11px; height: 11px; }
.row-b .tools button, .row-c .tools button { width: 15px; }
.row-b .tools + .tools button, .row-c .tools + .tools button { width: 14px; }
.row-b .sep, .row-c .sep { margin: 0 1px; }
.row-b .tools + .tools .sep, .row-c .tools + .tools .sep { margin: 0 2px; }
.more { width: 9px; height: 12px; display: flex; align-items: flex-end; justify-content: center; flex: none; }
.row-b .more, .row-c .more { width: 7px; }
.more::after { content: ""; border: 3px solid transparent; border-top-color: #000; border-bottom: 0; }
.dash { width: 3px; height: 1px; background: #777; margin: 0 1px; }

.combo { position: relative; display: block; height: 12px; flex: none; }
.combo select { appearance: none; width: 100%; height: 100%; padding: 0 10px 0 2px; border: 1px solid #aaa; background: #e3e3e3; display: block; line-height: 10px; }
.combo select:disabled { color: #888; background: #ccc; border-color: #c0c0c0; opacity: 1; }
.combo::after { content: ""; position: absolute; right: 5px; top: 3px; width: 4px; height: 4px; border: solid #666; border-width: 0 1px 1px 0; transform: rotate(45deg); pointer-events: none; }
.page-combo { width: 107px; margin-left: 4px; height: 13px; }
.page-combo select { padding-left: 17px; }
.zoom-combo { width: 39px; height: 13px; }
.zoom-combo select { background: #fff; }
.id-combo { width: 80px; height: 13px; }
.spin { display: flex; align-items: center; height: 13px; border: 1px solid; border-color: #777 #ccc #ccc #777; background: #fff; flex: none; }
.spin input { flex: 1; width: 0; min-width: 0; padding-left: 2px; height: 11px; }
.spin svg { width: 10px; height: 11px; padding: 1px 2px; background: #f0f0f0; border: 1px solid #ccc; flex: none; }
.id-spin { width: 38px; margin-left: 2px; }

.main { flex: 1; min-height: 0; display: flex; align-items: flex-start; padding-top: 1px; }
.left { width: 162px; height: 100%; display: flex; flex-direction: column; flex: none; }
.panel-head { height: 13px; flex: none; display: flex; align-items: center; gap: 1px; padding: 0 2px; background: #bfcddb; }
.panel-head h2 { flex: 1; font-weight: 500; }
.panel-head button { width: 10px; height: 10px; display: grid; place-items: center; background: #eee; border: 1px solid; border-color: #fff #777 #777 #fff; }
.panel-head svg { width: 7px; height: 7px; }
.left > .panel-head { border-right: 1px solid #eee; }
.tree { flex: 1; background: #fff; border: 1px solid #888; padding-top: 1px; list-style: none; min-height: 0; }
.tree li { height: 11px; display: flex; align-items: center; gap: 2px; padding-left: 4px; }
.tree li svg { width: 11px; height: 10px; margin-left: 3px; }
.tree .sel { background: #f0f0f0; }
.plus, .noplus { width: 6px; height: 6px; }
.plus { border: 1px solid #aaa; background: linear-gradient(#446, #446) center / 2px 1px no-repeat, linear-gradient(#446, #446) center / 1px 2px no-repeat; }
.tree-tools { display: flex; height: 17px; flex: none; align-items: center; gap: 3px; padding: 2px 2px 0; }
.tree-tools button, .tree-tools svg { width: 12px; height: 12px; display: block; }
.tree-tools button:disabled { opacity: .4; filter: grayscale(1); }
.dock-tabs { display: flex; gap: 2px; height: 15px; flex: none; padding-left: 2px; border-top: 1px solid #555; }
.dock-tabs button { display: flex; align-items: center; gap: 2px; padding: 0 0 0 2px; border-bottom: 1px solid #888; }
.dock-tabs svg { width: 11px; height: 11px; }
.dock-tabs .active { border: 1px solid #555; border-top: 0; border-left: 0; padding-right: 4px; }
.prop-head { margin-top: 4px; }
.tabs { display: flex; align-items: flex-end; height: 16px; flex: none; padding: 2px 2px 0; }
.tabs button { height: 12px; padding: 0 3px; border: 1px solid #e2e2e2; border-bottom: 0; }
.tabs .active { height: 14px; background: #fff; padding: 0 4px; }
.left .tabs { height: 18px; }
.left .tabs .active { padding: 0 6px; }
.props { border: 1px solid #ddd; margin: 0 2px 15px 1px; padding: 1px 0; flex: none; }
.prow { display: flex; align-items: center; height: 16px; gap: 4px; white-space: nowrap; }
.prow.dis, .dis { color: #999; }
.props .spin, .props .combo { height: 14px; }
.props .combo::after { top: 4px; }
.dis .spin, .spin.dis { background: #f0f0f0; border-color: #ccc; }
.spread { justify-content: space-between; padding: 0 7px 0 2px; }
.pad { padding: 0 6px 0 5px; gap: 3px; }
.lab { width: 41px; flex: none; display: flex; justify-content: flex-end; margin-right: -1px; }
.prow.tight { gap: 1px; }
.prow.tight .lab { margin-right: 2px; }
.w33 { width: 33px; }
.w42 { width: 42px; }
.w92 { width: 93px; }
.w72 { width: 73px; }
.w30 { width: 31px; }
.w32 { width: 32px; }
.w44 { width: 44px; }
.w102 { width: 103px; }
.prow label:not(.lab), .device label, .only { display: flex; align-items: center; gap: 1px; }
.auto { margin-left: 6px; }
input[type=radio], input[type=checkbox] { appearance: none; width: 9px; height: 9px; border: 1px solid #333; background: #fff; flex: none; display: grid; place-items: center; }
input[type=radio] { border-radius: 50%; }
input[type=radio]:checked::after { content: ""; width: 5px; height: 5px; border-radius: 50%; background: #222; }
input[type=checkbox]:checked::after { content: ""; width: 3px; height: 5px; border: solid #333; border-width: 0 1px 1px 0; transform: rotate(40deg); }
input[type=radio]:disabled, input[type=checkbox]:disabled { border-color: #bbb; }
.dis input[type=radio]:checked::after { background: #aaa; }
.dis input[type=checkbox]:checked::after { border-color: #aaa; }
.btn { height: 13px; border: 1px solid #bbb; background: #e3e3e3; display: grid; place-items: center; white-space: nowrap; padding: 0 3px; }
.btn:disabled { background: #ccc; color: #888; }
.grow { flex: 1; padding: 0; }
.sq { width: 13px; padding: 0; }
.sq svg { width: 9px; height: 9px; }
.blk { font-size: 6px; width: 14px; }
.deco { font-size: 9px; font-weight: bold; }
.out { color: #777; }
.act { background: #a8d2f7; border-color: #2a7fd0; }
.color { width: 42px; height: 13px; display: flex; align-items: center; padding: 2px; border: 1px solid; border-color: #fff #777 #777 #ccc; }
.color i { width: 26px; height: 8px; background: #fff; border: 1px solid #bbb; }
.color::after { content: ""; margin-left: auto; border: 3px solid transparent; border-top: 4px solid #000; border-bottom: 0; }
.color:disabled i { background: #eee; }
.color:disabled::after { border-top-color: #aaa; }
.memo { height: 59px; flex: none; margin: 0 3px 3px 1px; border: 1px solid #777; display: grid; grid-template: 1fr 1fr 12px / 1fr 1fr 12px; background: #f0f0f0; justify-items: center; align-items: center; }
.memo textarea { grid-area: 1 / 1 / 3 / 3; width: 100%; height: 100%; background: #fff; padding: 0 3px; resize: none; overflow: hidden; }
.memo .u { grid-area: 1 / 3; align-self: start; margin-top: 5px; }
.memo .d { grid-area: 2 / 3; align-self: end; margin-bottom: 5px; }
.memo .l { grid-area: 3 / 1; justify-self: start; margin-left: 5px; }
.memo .r { grid-area: 3 / 2; justify-self: end; margin-right: 3px; }
.memo .ch { border-color: #aaa; }
.ch { width: 4px; height: 4px; border: solid #333; border-width: 1px 0 0 1px; flex: none; }
.ch.u { transform: rotate(45deg); }
.ch.d { transform: rotate(225deg); }
.ch.l { transform: rotate(-45deg); }
.ch.r { transform: rotate(135deg); }

.work { flex: 1; height: 100%; margin: 0 4px 0 3px; display: grid; grid-template: 1fr 13px / 1fr 12px; min-width: 0; }
.view { position: relative; overflow: hidden; background: #2a3d67; border-top: 1px solid #777; padding: 56px 92px 0 40px; min-height: 0; }
.stage { position: relative; height: 100%; background: #000; }
.cross { position: absolute; width: 24px; height: 24px; left: calc(50% - 12px); top: 244px; }
.switch { position: absolute; left: 476px; top: 171px; width: 43px; height: 43px; border: 1px solid #7fd99a; background: linear-gradient(#86d89c, #3fbf63 40%, #15b445 55%, #1fae48); color: #fff; display: grid; place-items: center; font: bold 7px/10px "Liberation Mono", monospace; }
.switch i { position: absolute; width: 4px; height: 4px; background: #fff; border: 1px solid #ccc; left: -2px; top: -2px; }
.switch i:nth-child(2), .switch i:nth-child(7) { left: 19px; }
.switch i:nth-child(3), .switch i:nth-child(5), .switch i:nth-child(8) { left: 40px; }
.switch i:nth-child(4), .switch i:nth-child(5) { top: 19px; }
.switch i:nth-child(n+6) { top: 40px; }
.slide { position: absolute; left: 18px; bottom: 0; display: flex; height: 17px; }
.slide svg { width: 22px; height: 17px; }
.slide button { height: 17px; padding: 2px 6px 0; background: #d5e2d4; border-radius: 4px 4px 0 0; font-size: 9px; font-weight: bold; }
.vscroll { background: #f0f0f0; display: flex; flex-direction: column; align-items: center; padding: 6px 0; }
.vscroll b { width: 10px; background: #c1c1c1; margin-top: 148px; height: 40%; }
.vscroll .d { margin-top: auto; }
.hscroll { display: flex; align-items: center; padding: 0 6px 2px; }
.hscroll b { height: 10px; background: #c1c1c1; margin-left: 22%; width: 59%; }
.hscroll .r { margin-left: auto; }

.right { width: 231px; height: 100%; flex: none; display: flex; flex-direction: column; padding-bottom: 2px; }
.rbody { flex: 1; min-height: 0; display: flex; flex-direction: column; border-left: 2px solid #888; border-top: 1px solid #888; padding: 9px 4px 2px 3px; }
.plc { height: 14px; display: flex; align-items: center; padding-left: 3px; flex: none; }
.plc label { width: 19px; }
.plc .spin { margin: 0 7px 0 6px; }
.take { width: 38px; }
.rbody .tabs { height: 24px; padding-left: 0; }
.sheet { flex: 1; min-height: 0; display: flex; flex-direction: column; margin-bottom: 2px; border: 1px solid; border-color: #888 #fff #fff #888; border-bottom-width: 2px; padding: 8px 3px 10px 5px; }
.form { width: 146px; flex: none; }
.frow { display: flex; align-items: center; height: 13px; justify-content: space-between; }
.frow .combo { width: 112px; }
fieldset { margin: 0; padding: 0 5px; border: 1px solid #ddd; display: flex; align-items: center; min-width: 0; }
legend { padding: 0 2px; }
.device { height: 34px; margin-top: 3px; gap: 6px; padding-bottom: 1px; }
.device .combo { margin-left: auto; height: 14px; }
.device .combo::after, .drop .combo::after { top: 4px; }
.filter { margin-top: 5px; height: 14px; }
.filter input { width: 96px; height: 14px; border: 1px solid #777; background: #fff; }
.only { margin: 5px 0 0 19px; height: 12px; white-space: nowrap; }
.listbox { flex: 1; min-height: 0; display: flex; margin-top: 4px; border: 1px solid #777; border-color: #777 #ddd #fff #777; background: #fff; }
.rows { flex: 1; overflow: hidden; min-width: 0; }
.rows table { width: 100%; table-layout: fixed; border-collapse: collapse; }
.rows th, .rows td { height: 10px; padding: 0 2px; line-height: 9px; text-align: left; font-weight: normal; border-bottom: 1px solid #eee; border-right: 1px solid #eee; white-space: nowrap; overflow: hidden; }
.rows th { background: #f5f5f5; }
.rows th:first-child { width: 45px; }
.rows td + td, .rows th + th { padding-left: 1px; }
.rows .sel td { background: #0078d7; color: #fff; border-color: #0078d7; }
.list-scroll { width: 11px; flex: none; }
.list-scroll b { margin-top: 2px; height: 51px; }
.drop { width: 146px; height: 31px; margin-top: 5px; gap: 3px; padding: 0 2px 1px; flex: none; white-space: nowrap; }
.drop .combo { height: 14px; }
.rfoot { display: flex; gap: 4px; height: 14px; flex: none; margin: 0 0 0 -2px; }
.rfoot span { flex: 1; border: 1px solid; border-color: #aaa #fff #fff #aaa; padding-left: 1px; line-height: 12px; }
.rfoot .btn { width: 43px; padding: 0; }

.vtools { flex: none; width: 17px; display: flex; flex-direction: column; align-items: center; border: 1px solid; border-color: #fafafa #aaa #aaa #fafafa; }
.right + .vtools { margin-left: 2px; }
.tall { height: 267px; }
.mid { height: 246px; }
.short { height: 93px; margin-top: 268px; }
.vtools button { flex: 1; display: grid; place-items: center; min-height: 0; }
.vtools svg { width: 12px; height: 12px; }
.hgrip { width: 12px; height: 3px; margin: 1px 0; border-top: 1px solid #fff; border-bottom: 1px solid #aaa; flex: none; }
.hsep { width: 13px; height: 1px; margin: 2px 0; background: #aaa; flex: none; }
.vmore { width: 12px; height: 8px; display: flex; justify-content: flex-end; align-items: center; flex: none; }
.vmore::after { content: ""; border: 3px solid transparent; border-left: 4px solid #000; border-right: 0; }

.coords .spin { width: 35px; }
.coords .grip { margin: 0; }
.p { width: 10px; text-align: center; }
.p.wide { width: 25px; }
.p.mid { width: 13px; height: auto; border: 0; }
.status { height: 14px; flex: none; display: flex; gap: 2px; align-items: center; padding-right: 1px; font: 7px/11px "Open Sans", "Noto Sans CJK JP", sans-serif; }
.status span { border: 1px solid; border-color: #aaa #fff #fff #aaa; padding: 0 2px; white-space: nowrap; }
.status .msg { flex: 1; border: 0; font-size: 8px; }
.status .pos { min-width: 33px; text-align: center; }
```
